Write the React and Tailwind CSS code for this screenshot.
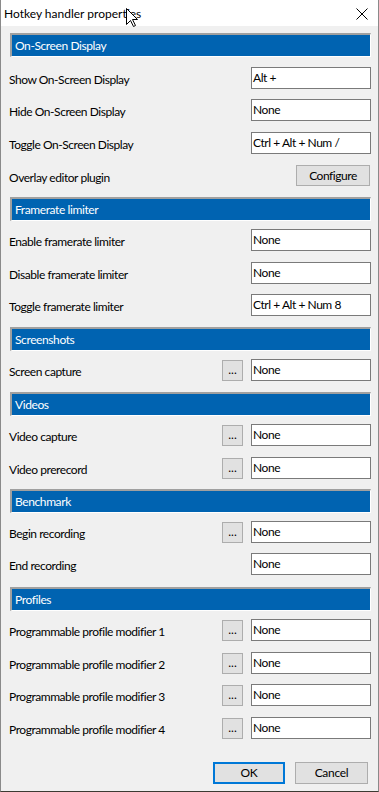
import React from "react";

const FONT = { fontFamily: "Lato, 'Noto Sans', sans-serif" };

function Header({ title, mt }) {
  return (
    <div
      className={`${mt} ml-[9px] w-[361px] h-[24px] bg-[#0063b1] border-t-2 border-l-2 border-t-[#a0a0a0] border-l-[#a0a0a0] border-b border-r border-b-white border-r-white flex items-center pl-[3px] text-white text-[12px] tracking-[-0.4px]`}
    >
      {title}
    </div>
  );
}

function Row({ label, value, dots, mt }) {
  return (
    <div className={`${mt} ml-[9px] w-[361px] h-[22px] flex items-center text-[12px] tracking-[-0.45px] text-black`}>
      <div className="flex-1 pt-[3px] -ml-[1px]">{label}</div>
      {dots && (
        <div className="w-[21px] h-[21px] mr-[8px] bg-[#e1e1e1] border border-[#adadad] flex items-end justify-center leading-none pb-[4px] text-[12px] tracking-normal">
          ...
        </div>
      )}
      <div className="w-[120px] h-[22px] bg-white border border-[#7a7a7a] pl-[1px] pt-[2px] leading-[16px] whitespace-nowrap">
        {value}
      </div>
    </div>
  );
}

function ButtonRow({ label, mt }) {
  return (
    <div className={`${mt} ml-[9px] w-[361px] h-[22px] flex items-start text-[12px] tracking-[-0.45px] text-black`}>
      <div className="flex-1 pt-[4px] -ml-[1px]">{label}</div>
      <div className="w-[74px] h-[21px] bg-[#e1e1e1] border border-[#adadad] flex items-center justify-center mr-[1px]">
        Configure
      </div>
    </div>
  );
}

export default function App() {
  return (
    <div
      className="w-[379px] h-[792px] bg-[#f0f0f0] border-l border-r border-b border-l-[#8a8a8a] border-r-[#8a8a8a] border-b-[#3c3a32] flex flex-col relative overflow-hidden"
      style={FONT}
    >
      <div className="h-[26px] bg-white flex items-center justify-between pl-[3px] pr-[10px] text-[12px] text-black shrink-0">
        <span className="pt-[1px]">Hotkey handler properties</span>
        <svg width="12" height="12" viewBox="0 0 12 12" className="mt-[1px]">
          <path d="M0.5 0.5 L11.5 11.5 M11.5 0.5 L0.5 11.5" stroke="#000" strokeWidth="1" />
        </svg>
      </div>

      <Header title="On-Screen Display" mt="mt-[7px]" />
      <Row label="Show On-Screen Display" value="Alt +" mt="mt-[10px]" />
      <Row label="Hide On-Screen Display" value="None" mt="mt-[10px]" />
      <Row label="Toggle On-Screen Display" value="Ctrl + Alt + Num /" mt="mt-[11px]" />
      <ButtonRow label="Overlay editor plugin" mt="mt-[11px]" />

      <Header title="Framerate limiter" mt="mt-[10px]" />
      <Row label="Enable framerate limiter" value="None" mt="mt-[8px]" />
      <Row label="Disable framerate limiter" value="None" mt="mt-[11px]" />
      <Row label="Toggle framerate limiter" value="Ctrl + Alt + Num 8" mt="mt-[10px]" />

      <Header title="Screenshots" mt="mt-[11px]" />
      <Row label="Screen capture" value="None" dots mt="mt-[8px]" />

      <Header title="Videos" mt="mt-[11px]" />
      <Row label="Video capture" value="None" dots mt="mt-[8px]" />
      <Row label="Video prerecord" value="None" dots mt="mt-[11px]" />

      <Header title="Benchmark" mt="mt-[10px]" />
      <Row label="Begin recording" value="None" dots mt="mt-[8px]" />
      <Row label="End recording" value="None" mt="mt-[10px]" />

      <Header title="Profiles" mt="mt-[12px]" />
      <Row label="Programmable profile modifier 1" value="None" dots mt="mt-[8px]" />
      <Row label="Programmable profile modifier 2" value="None" dots mt="mt-[11px]" />
      <Row label="Programmable profile modifier 3" value="None" dots mt="mt-[10px]" />
      <Row label="Programmable profile modifier 4" value="None" dots mt="mt-[11px]" />

      <div className="mt-[23px] flex justify-end gap-[10px] pr-[10px] text-[12px] tracking-[-0.3px] text-black">
        <div className="w-[72px] h-[22px] bg-[#e1e1e1] border-2 border-[#0078d7] flex items-center justify-center">
          OK
        </div>
        <div className="w-[73px] h-[22px] bg-[#e1e1e1] border border-[#adadad] flex items-center justify-center">
          Cancel
        </div>
      </div>

      <svg
        width="14"
        height="21"
        viewBox="0 0 14 21"
        className="absolute left-[124px] top-[7px]"
      >
        <path
          d="M1.5 1.5 L1.5 17.5 L5.5 13.5 L8.5 19.5 L10.5 18.5 L7.5 12.5 L12.5 12.5 Z"
          fill="#fff"
          stroke="#000"
          strokeWidth="1"
          strokeLinejoin="miter"
        />
      </svg>
    </div>
  );
}
